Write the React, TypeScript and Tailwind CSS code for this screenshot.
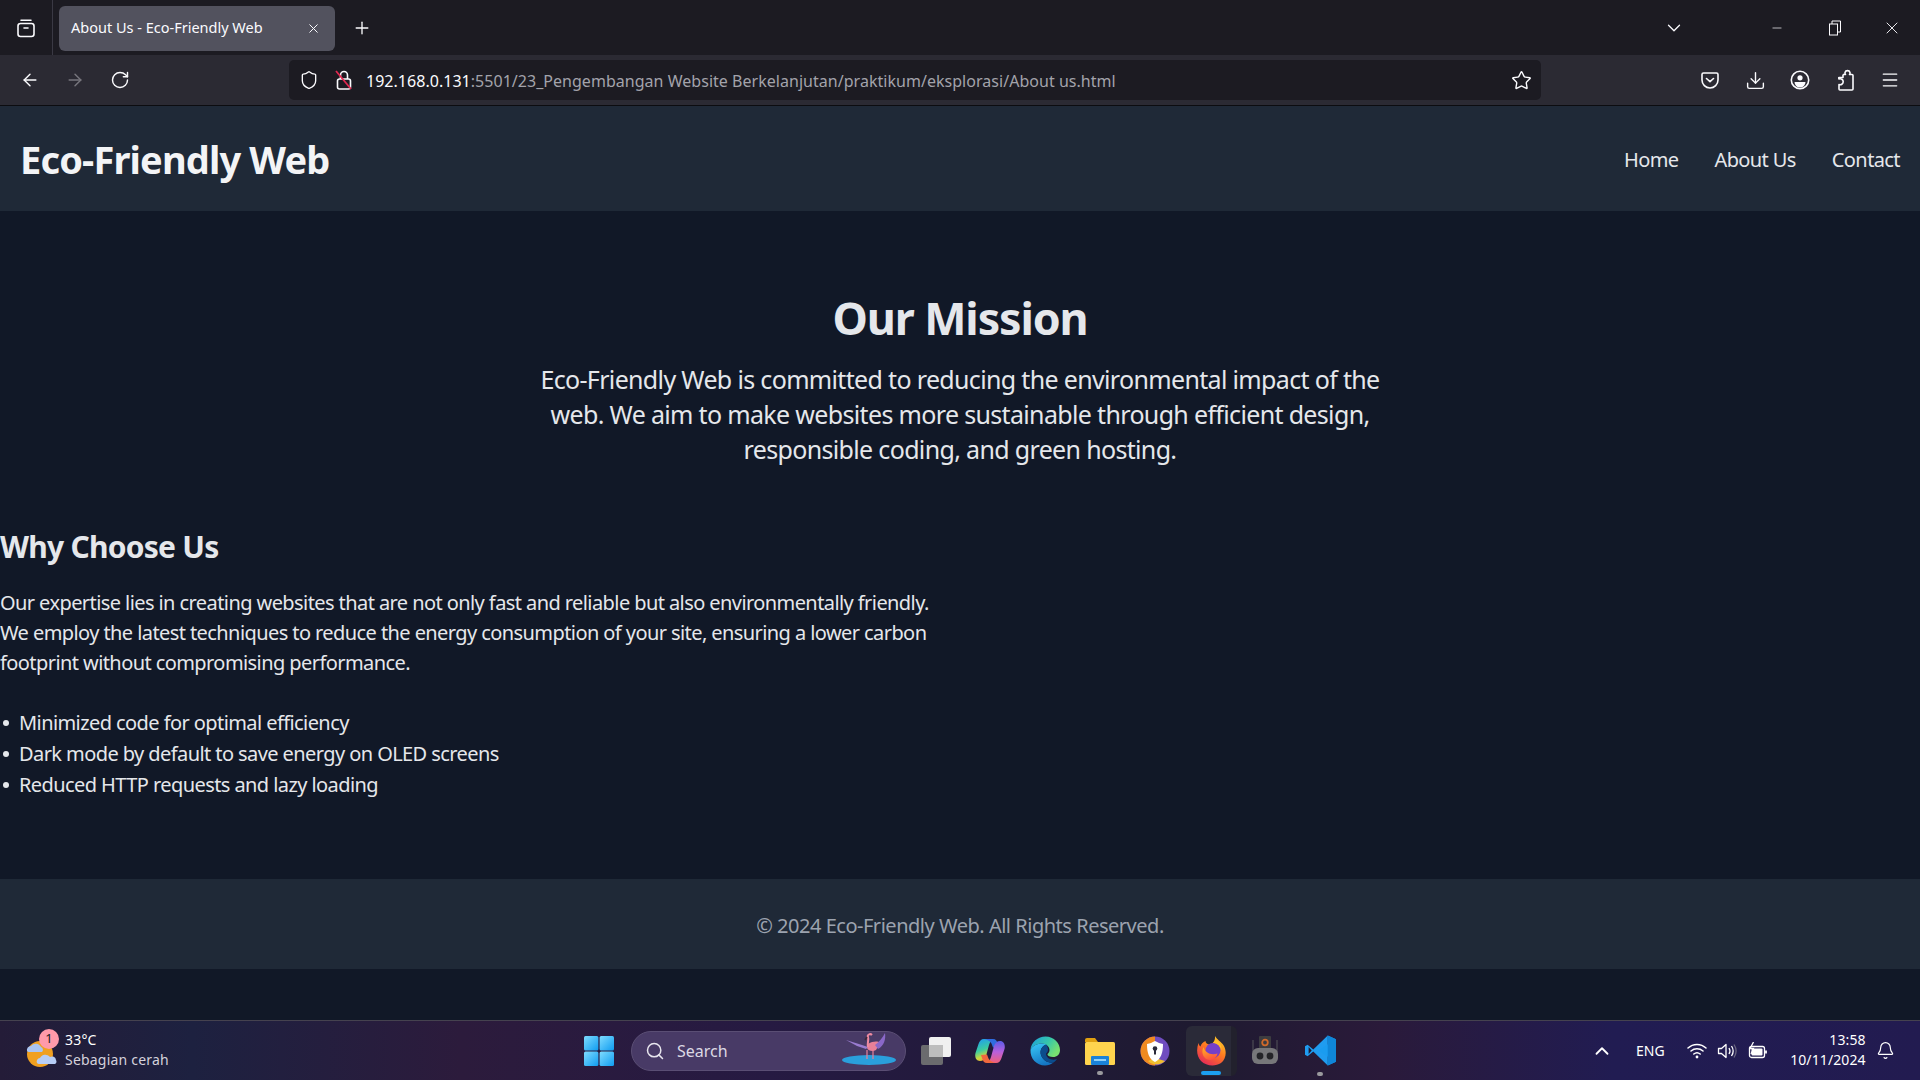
import React from 'react';
import { ArrowLeft, ArrowRight, RotateCw, Star, Download, Menu, Plus, X, ChevronDown, ChevronUp, Minus, Shield, Search, Bell } from 'lucide-react';

const uiFont = "font-['Noto_Sans','Open_Sans',sans-serif]";

function TabListIcon() {
    return (
        <svg width="20" height="20" viewBox="0 0 20 20" fill="none" stroke="#fbfbfe" strokeWidth="1.6">
            <rect x="2" y="5.5" width="16" height="13" rx="2.5" />
            <path d="M5 2.2h10M8 10h4" strokeLinecap="round" />
        </svg>
    );
}

function LockSlashIcon() {
    return (
        <svg width="20" height="22" viewBox="0 0 20 22" fill="none" stroke="#fbfbfe" strokeWidth="1.6">
            <rect x="3.5" y="10" width="13" height="10" rx="2" />
            <path d="M6.5 10V6a3.5 3.5 0 0 1 7 0v4" />
            <path d="M2 2l15 18" stroke="#e22850" strokeWidth="1.8" />
        </svg>
    );
}

function PocketIcon() {
    return (
        <svg width="20" height="20" viewBox="0 0 20 20" fill="none" stroke="#fbfbfe" strokeWidth="1.6">
            <path d="M2 4.5A1.5 1.5 0 0 1 3.5 3h13A1.5 1.5 0 0 1 18 4.5V10a8 8 0 0 1-16 0z" />
            <path d="M6.5 8.5l3.5 3.2 3.5-3.2" strokeLinecap="round" strokeLinejoin="round" />
        </svg>
    );
}

function AccountIcon() {
    return (
        <svg width="20" height="20" viewBox="0 0 20 20" fill="none">
            <circle cx="10" cy="10" r="8.7" stroke="#fbfbfe" strokeWidth="1.6" />
            <circle cx="10" cy="7.8" r="2.6" fill="#fbfbfe" />
            <path d="M4.5 12h11a5.5 5.5 0 0 1-11 0z" fill="#fbfbfe" />
        </svg>
    );
}

function ExtensionIcon() {
    return (
        <svg width="20" height="22" viewBox="0 0 20 22" fill="none" stroke="#fbfbfe" strokeWidth="1.6" strokeLinejoin="round">
            <path d="M8 5.5h2.5a2.5 2.5 0 0 1-.5-2A2.6 2.6 0 0 1 15 3.5c.2.8 0 1.5-.5 2H17a1 1 0 0 1 1 1V20a1 1 0 0 1-1 1H5a1 1 0 0 1-1-1v-4.5a3 3 0 1 0 0-5.5V8" />
            <path d="M4 10V8.5h4V5.5" />
        </svg>
    );
}

function RestoreIcon() {
    return (
        <svg width="12" height="16" viewBox="0 0 12 16" fill="none" stroke="#fbfbfe" strokeWidth="1">
            <rect x="0.5" y="4" width="8" height="11" />
            <path d="M3 4V1h8.5v11H8.5" />
        </svg>
    );
}

function WindowsLogo() {
    return (
        <svg width="30" height="30" viewBox="0 0 30 30">
            <defs>
                <linearGradient id="winA" x1="0" y1="0" x2="1" y2="1">
                    <stop offset="0" stopColor="#7fdcff" />
                    <stop offset="1" stopColor="#0f9cf0" />
                </linearGradient>
            </defs>
            <rect x="0" y="0" width="14.4" height="14.4" rx="1.5" fill="url(#winA)" />
            <rect x="15.6" y="0" width="14.4" height="14.4" rx="1.5" fill="url(#winA)" />
            <rect x="0" y="15.6" width="14.4" height="14.4" rx="1.5" fill="url(#winA)" />
            <rect x="15.6" y="15.6" width="14.4" height="14.4" rx="1.5" fill="url(#winA)" />
        </svg>
    );
}

function WeatherIcon() {
    return (
        <svg width="36" height="36" viewBox="0 0 36 36">
            <circle cx="17" cy="21" r="13" fill="#f0a020" />
            <path d="M4 18a4 4 0 0 1 4-5 6 6 0 0 1 10 1 3 3 0 0 1 1 5H6a3 3 0 0 1-2-1z" fill="#a9c4f2" />
            <path d="M14 30a3.5 3.5 0 0 1 3-5 6 6 0 0 1 10-1 4 4 0 0 1 6 3 3 3 0 0 1-1 4H16a3 3 0 0 1-2-1z" fill="#b6cdf5" />
        </svg>
    );
}

function Flamingo() {
    return (
        <svg width="56" height="34" viewBox="0 0 56 34">
            <ellipse cx="28" cy="28" rx="27" ry="5" fill="#2a9fdc" />
            <path d="M27 12c5-3 10-3 12-1l-4 7c-3 2-8 1-9-2z" fill="#e88098" />
            <path d="M34 13c4-3 8-8 10-12 1 6-1 13-7 16z" fill="#8a68c8" />
            <path d="M5 8l16 5 6 2-2 2-9-3z" fill="#9a7cd0" />
            <path d="M27 15c-1-4 1-7 0-10-1-2 2-4 4-2" fill="none" stroke="#ee8aa0" strokeWidth="2" />
            <path d="M26 5l-2 3" stroke="#3a2a3a" strokeWidth="1.5" />
            <path d="M26 18v9M32 18v9" stroke="#e88098" strokeWidth="1.2" />
        </svg>
    );
}

function TaskViewIcon() {
    return (
        <svg width="32" height="30" viewBox="0 0 32 30">
            <rect x="1" y="9" width="22" height="20" rx="2" fill="#6b6b6e" />
            <rect x="9" y="1" width="22" height="20" rx="2" fill="#f0f0f0" />
            <rect x="9" y="9" width="14" height="12" fill="#bdbdbd" />
        </svg>
    );
}

function CopilotIcon() {
    return (
        <svg width="30" height="30" viewBox="0 0 30 30">
            <defs>
                <linearGradient id="copA" x1="0.2" y1="0" x2="0.5" y2="1">
                    <stop offset="0" stopColor="#1f9ef0" />
                    <stop offset="0.5" stopColor="#3ccca0" />
                    <stop offset="0.8" stopColor="#c8d840" />
                    <stop offset="1" stopColor="#f0a830" />
                </linearGradient>
                <linearGradient id="copB" x1="0.5" y1="0" x2="0.5" y2="1">
                    <stop offset="0" stopColor="#5a5ce8" />
                    <stop offset="0.5" stopColor="#b860dc" />
                    <stop offset="1" stopColor="#f06078" />
                </linearGradient>
            </defs>
            <path d="M9 3h9c-2 1-3 3-4 6l-3 11c-1 3-3 5-6 5-4 0-5.500-4-4.500-8L3.500 8C4.500 5 6 3 9 3z" fill="url(#copA)" />
            <path d="M9 3h9c3 0 4 2 5 5l1 3-6 .5-1.500-4C15 5 12 3.500 9 3z" fill="#2f6ce0" />
            <path d="M21 27h-9c2-1 3-3 4-6l3-11c1-3 3-5 6-5 4 0 5.500 4 4.500 8L26.500 22C25.500 25 24 27 21 27z" fill="url(#copB)" />
            <path d="M21 27h-9c-3 0-4-2-5-5l-1-3 6-.5 1.500 4C15 25 18 26.500 21 27z" fill="#f0683e" />
        </svg>
    );
}

function EdgeIcon() {
    return (
        <svg width="30" height="30" viewBox="0 0 30 30">
            <defs>
                <linearGradient id="edgeA" x1="0.3" y1="0" x2="0.7" y2="1">
                    <stop offset="0" stopColor="#35c1f1" />
                    <stop offset="1" stopColor="#1270c0" />
                </linearGradient>
                <linearGradient id="edgeB" x1="0" y1="0" x2="1" y2="0.5">
                    <stop offset="0" stopColor="#1a9ce0" />
                    <stop offset="0.6" stopColor="#38c8a8" />
                    <stop offset="1" stopColor="#78e070" />
                </linearGradient>
            </defs>
            <path d="M.5 14C1 6 8 .5 15.5.5 24 .5 30 7 30 14c0 4.500-3 7-7 7-3 0-5.500-1-5.500-2.500 0-1 2-1.500 2-4.500 0-3.500-3.500-6.500-7.500-6.500C7 7.500 2 10 .5 14z" fill="url(#edgeB)" />
            <path d="M.5 14C2 10 7 7.500 12 7.500c1.500 0 3 .4 4.300 1C12 10 9.500 14 11 19c1.500 5 7 8.500 12.500 7.500C21 28.500 18 29.500 15 29.500 6.500 29.500 0 22.500.5 14z" fill="url(#edgeA)" />
            <path d="M16.300 8.500c-4.300 1.500-6.800 5.500-5.300 10.500 1.500 5 7 8.500 12.500 7.500 1.500-1 2.500-2 3.500-3.500-5 2-10.500-.5-11-5 0-1 2-1.500 2-4.500 0-2-1-4-1.700-5z" fill="#0b4c8c" />
        </svg>
    );
}

function FolderIcon() {
    return (
        <svg width="30" height="28" viewBox="0 0 30 28">
            <path d="M0 3a2 2 0 0 1 2-2h8l3 4H0z" fill="#e0a010" />
            <rect x="0" y="5" width="30" height="23" rx="1.5" fill="#ffd44e" />
            <rect x="6" y="19" width="18" height="9" rx="1" fill="#1a82d8" />
            <rect x="9" y="22" width="12" height="2" fill="#8fd0f8" />
        </svg>
    );
}

function VpnIcon() {
    return (
        <svg width="30" height="30" viewBox="0 0 30 30">
            <circle cx="15" cy="15" r="14.5" fill="#6f4cc0" />
            <path d="M15 .5a14.500 14.500 0 0 0 0 29z" fill="#f08a20" />
            <path d="M8 25c4 4 12 5 17 0l-10-3z" fill="#f0c030" />
            <path d="M15 5c3 1.500 5 2.500 8 3 0 9-2 15-8 18-6-3-8-9-8-18 3-.5 5-1.500 8-3z" fill="#fff" />
            <circle cx="15" cy="12.5" r="2.3" fill="#2a2a3a" />
            <rect x="14" y="13" width="2" height="5.5" fill="#2a2a3a" />
        </svg>
    );
}

function FirefoxIcon() {
    return (
        <svg width="30" height="30" viewBox="0 0 30 30">
            <defs>
                <linearGradient id="foxA" x1="0.8" y1="0" x2="0.2" y2="1">
                    <stop offset="0" stopColor="#ffd32a" />
                    <stop offset="0.45" stopColor="#ff7a20" />
                    <stop offset="1" stopColor="#e3245c" />
                </linearGradient>
                <linearGradient id="foxB" x1="0.2" y1="0" x2="0.6" y2="1">
                    <stop offset="0" stopColor="#ffb020" />
                    <stop offset="1" stopColor="#ff5040" />
                </linearGradient>
            </defs>
            <path d="M18 0c2 4 6 5 9 10 3 6 2 13-3 17-6 4-15 3-20-2C0 21-1 14 1.500 7c.5 2 1 3 2 3.500C4 8 6 6 8.500 5c0 2 2 3.500 4 3.500 3 0 6-4 5.500-8.500z" fill="url(#foxA)" />
            <circle cx="16" cy="14.5" r="7.5" fill="#7540c8" />
            <path d="M18 4c4 1 7 5 6.500 10.500C23 9 20 7 16 7c1-1 2-2 2-3z" fill="#ffc02a" />
            <path d="M6.500 11c1 5 7 9 14 6.500-1 5-6 7.500-10 6C6 22 4 16 6.500 11z" fill="url(#foxB)" />
        </svg>
    );
}

function RobotIcon() {
    return (
        <svg width="28" height="30" viewBox="0 0 28 30">
            <rect x="8" y="0" width="12" height="13" rx="1" fill="#3c3c40" />
            <circle cx="14" cy="6.5" r="2.8" fill="none" stroke="#d06a2a" strokeWidth="1.8" />
            <path d="M2 4v12M26 4v12" stroke="#55555a" strokeWidth="1" />
            <rect x="1" y="12" width="26" height="16" rx="6" fill="#77777a" />
            <circle cx="9" cy="20" r="3.4" fill="#242428" />
            <circle cx="19" cy="20" r="3.4" fill="#242428" />
        </svg>
    );
}

function VscodeIcon() {
    return (
        <svg width="31" height="31" viewBox="0 0 30 30">
            <path d="M22 .5L8 14 2.500 9.500 0 11v8l2.500 1.500L8 16l14 13.500z" fill="#1f9cf0" />
            <path d="M22 .5l8 3.500v22l-8 3.500V21L13 15l9-6z" fill="#1a9cf0" />
            <path d="M22 .5l8 3.500v22l-8 3.500z" fill="#0f86d8" />
            <path d="M3.500 11.500L6.500 15l-3 3.500z" fill="#1c1a30" />
        </svg>
    );
}

function WifiIcon() {
    return (
        <svg width="20" height="18" viewBox="0 0 20 18" fill="none" stroke="#fff" strokeWidth="1.5" strokeLinecap="round">
            <path d="M1 6a13 13 0 0 1 18 0M4 9a9 9 0 0 1 12 0M6.800 12a5 5 0 0 1 6.400 0" />
            <circle cx="10" cy="15" r="1.4" fill="#fff" stroke="none" />
        </svg>
    );
}

function VolumeIcon() {
    return (
        <svg width="20" height="18" viewBox="0 0 20 18" fill="none" stroke="#fff" strokeWidth="1.3">
            <path d="M1.500 6.500h3L9 2.500v13l-4.500-4h-3z" strokeLinejoin="round" />
            <path d="M12 6c1.200 1.800 1.200 4.200 0 6" />
            <path d="M14.500 4c2 3 2 7 0 10" />
            <path d="M17 2.500c2.600 4 2.600 9 0 13" stroke="#6a6680" />
        </svg>
    );
}

function BatteryIcon() {
    return (
        <svg width="20" height="18" viewBox="0 0 20 18" fill="none" stroke="#fff" strokeWidth="1.3">
            <rect x="1.5" y="4.5" width="15" height="11" rx="2" />
            <rect x="3.5" y="6.5" width="11" height="7" rx="1" fill="#fff" stroke="none" />
            <path d="M18 8.500v3" strokeWidth="1.8" />
            <path d="M5.500 0L2 6.500h3.500L3 12" stroke="#fff" strokeWidth="1.3" />
        </svg>
    );
}

function TabBar() {
    return (
        <div className="h-[55px] bg-[#1c1b22] flex items-center text-[#fbfbfe] shrink-0">
            <div className="w-[53px] h-full flex items-center justify-center border-r border-[#3a3944]">
                <TabListIcon />
            </div>
            <div className="ml-[6px] w-[276px] h-[45px] mt-[1px] bg-[#52525e] rounded-[6px] flex items-center pl-3 pr-[14px] justify-between">
                <span className="text-[14.5px] whitespace-nowrap">About Us - Eco-Friendly Web</span>
                <X size={15} strokeWidth={1.6} />
            </div>
            <div className="ml-[17px]"><Plus size={20} strokeWidth={1.6} /></div>
            <div className="ml-[1291px]"><ChevronDown size={22} strokeWidth={1.4} /></div>
            <div className="ml-[85px]"><Minus size={14} strokeWidth={1.2} /></div>
            <div className="ml-[45px]"><RestoreIcon /></div>
            <div className="ml-[41px]"><X size={20} strokeWidth={1.1} /></div>
        </div>
    );
}

function Toolbar() {
    return (
        <div className="h-[50px] bg-[#2b2a33] flex items-center text-[#fbfbfe] shrink-0 border-b border-[#0c0c10] box-content">
            <div className="ml-[20px]"><ArrowLeft size={20} strokeWidth={1.7} /></div>
            <div className="ml-[25px] text-[#77767d]"><ArrowRight size={20} strokeWidth={1.7} /></div>
            <div className="ml-[25px]"><RotateCw size={20} strokeWidth={1.7} /></div>
            <div className="ml-[159px] w-[1252px] h-[40px] bg-[#1c1b22] rounded-[5px] flex items-center pl-[10px] pr-[9px]">
                <Shield size={20} strokeWidth={1.6} />
                <div className="ml-[15px]"><LockSlashIcon /></div>
                <span className="ml-[12px] pt-[2px] text-[16px] tracking-[0.03px] whitespace-nowrap text-[#fbfbfe]">
                    192.168.0.131<span className="text-[#a3a3ab]">:5501/23_Pengembangan Website Berkelanjutan/praktikum/eksplorasi/About us.html</span>
                </span>
                <div className="ml-auto"><Star size={21} strokeWidth={1.6} /></div>
            </div>
            <div className="ml-[159px]"><PocketIcon /></div>
            <div className="ml-[25px]"><Download size={21} strokeWidth={1.6} /></div>
            <div className="ml-[24px]"><AccountIcon /></div>
            <div className="ml-[25px]"><ExtensionIcon /></div>
            <div className="ml-[25px]"><Menu size={20} strokeWidth={1.6} /></div>
        </div>
    );
}

const perks = [
    'Minimized code for optimal efficiency',
    'Dark mode by default to save energy on OLED screens',
    'Reduced HTTP requests and lazy loading',
];

function Site() {
    return (
        <div className="flex-1 bg-[#111827] text-[#e5e7eb] flex flex-col min-h-0">
            <header className="h-[105px] bg-[#1f2937] flex items-center justify-between px-5 shrink-0">
                <h1 className="text-[38px] font-bold tracking-[-0.85px] leading-none text-[#f3f4f6]">Eco-Friendly Web</h1>
                <nav className="flex gap-9 pt-[2px] text-[20px] tracking-[-0.6px]">
                    <span>Home</span>
                    <span>About Us</span>
                    <span>Contact</span>
                </nav>
            </header>
            <main className="flex-1">
                <section className="pt-[77px] flex flex-col items-center text-center">
                    <h2 className="text-[44.8px] leading-[60px] font-bold tracking-[-1.1px] mb-[14px]">Our Mission</h2>
                    <p className="w-[860px] text-[25px] leading-[35px] tracking-[-0.66px]">
                        Eco-Friendly Web is committed to reducing the environmental impact of the web. We aim to make websites more sustainable through efficient design, responsible coding, and green hosting.
                    </p>
                </section>
                <section className="pt-[59px]">
                    <h3 className="text-[30px] leading-[42px] font-bold tracking-[-0.74px] mb-[20px]">Why Choose Us</h3>
                    <p className="w-[960px] text-[20px] leading-[30px] tracking-[-0.58px]">
                        Our expertise lies in creating websites that are not only fast and reliable but also environmentally friendly. We employ the latest techniques to reduce the energy consumption of your site, ensuring a lower carbon footprint without compromising performance.
                    </p>
                    <ul className="mt-[29px] text-[20px] leading-[31px] tracking-[-0.58px]">
                        {perks.map((perk) => (
                            <li key={perk} className="flex items-center">
                                <span className="ml-[3px] mr-[10px] w-[6px] h-[6px] rounded-full bg-[#e5e7eb]" />
                                {perk}
                            </li>
                        ))}
                    </ul>
                </section>
            </main>
            <footer className="h-[90px] bg-[#1f2937] flex items-center justify-center pt-[3px] text-[20px] tracking-[-0.48px] text-[#9ca3af] shrink-0 mb-[51px]">
                © 2024 Eco-Friendly Web. All Rights Reserved.
            </footer>
        </div>
    );
}

function Taskbar() {
    return (
        <div className="h-[60px] shrink-0 border-t border-[#45424f] bg-[linear-gradient(90deg,#241c38_0%,#1d2140_10%,#2c1b3c_24%,#261a42_40%,#221a3c_50%,#1e1a30_62%,#2a1a3a_72%,#211c52_84%,#221b50_100%)] flex items-center text-white">
            <div className="ml-[23px] relative w-[38px] h-[38px] flex items-center">
                <WeatherIcon />
                <span className="absolute left-[16px] top-[-3px] w-5 h-5 rounded-full bg-[#ff9aaa] text-[#1c1b22] text-[13px] flex items-center justify-center">1</span>
            </div>
            <div className="ml-[4px] mt-[-2px] flex flex-col leading-[20px] text-[14px] tracking-[0.2px] w-[120px]">
                <span>33°C</span>
                <span className="text-[#d5d2dc]">Sebagian cerah</span>
            </div>
            <div className="ml-[399px]"><WindowsLogo /></div>
            <div className="ml-[17px] w-[275px] h-[40px] rounded-full bg-[#483a66] border border-[#5a4e74] flex items-center pl-[13px] pr-[8px] relative">
                <Search size={20} strokeWidth={1.8} className="text-[#e8e6ee]" />
                <span className="ml-[12px] text-[16px] text-[#dcd9e4]">Search</span>
                <div className="ml-auto mt-[-4px]"><Flamingo /></div>
            </div>
            <div className="ml-[14px] w-[32px]"><TaskViewIcon /></div>
            <div className="ml-[23px] w-[30px]"><CopilotIcon /></div>
            <div className="ml-[25px] w-[30px]"><EdgeIcon /></div>
            <div className="ml-[25px] w-[30px] relative">
                <FolderIcon />
                <span className="absolute left-[12px] bottom-[-10px] w-[6px] h-[4px] rounded-full bg-[#9a9a9e]" />
            </div>
            <div className="ml-[25px] w-[30px]"><VpnIcon /></div>
            <div className="ml-[16px] w-[51px] h-[50px] rounded-[6px] bg-[#2a2a38] border-r-[6px] border-[#22212d] pl-[6px] flex items-center justify-center relative">
                <FirefoxIcon />
                <span className="absolute left-[15px] bottom-[1px] w-[20px] h-[4px] rounded-full bg-[#1c9ff0]" />
            </div>
            <div className="ml-[14px] w-[28px]"><RobotIcon /></div>
            <div className="ml-[26px] w-[31px] relative">
                <VscodeIcon />
                <span className="absolute left-[12px] bottom-[-10px] w-[6px] h-[4px] rounded-full bg-[#9a9a9e]" />
            </div>
            <div className="ml-[255px]"><ChevronUp size={22} strokeWidth={2} /></div>
            <span className="ml-[23px] text-[14px]">ENG</span>
            <div className="ml-[22px]"><WifiIcon /></div>
            <div className="ml-[10px]"><VolumeIcon /></div>
            <div className="ml-[11px]"><BatteryIcon /></div>
            <div className="ml-[18px] mt-[-2px] flex flex-col items-end leading-[20px] text-[14px] tracking-[0.1px] w-[80px]">
                <span>13:58</span>
                <span>10/11/2024</span>
            </div>
            <div className="ml-[10px]"><Bell size={19} strokeWidth={1.5} /></div>
        </div>
    );
}

export default function App() {
    return (
        <div className={`w-[1920px] h-[1080px] flex flex-col overflow-hidden ${uiFont}`}>
            <TabBar />
            <Toolbar />
            <Site />
            <Taskbar />
        </div>
    );
}
